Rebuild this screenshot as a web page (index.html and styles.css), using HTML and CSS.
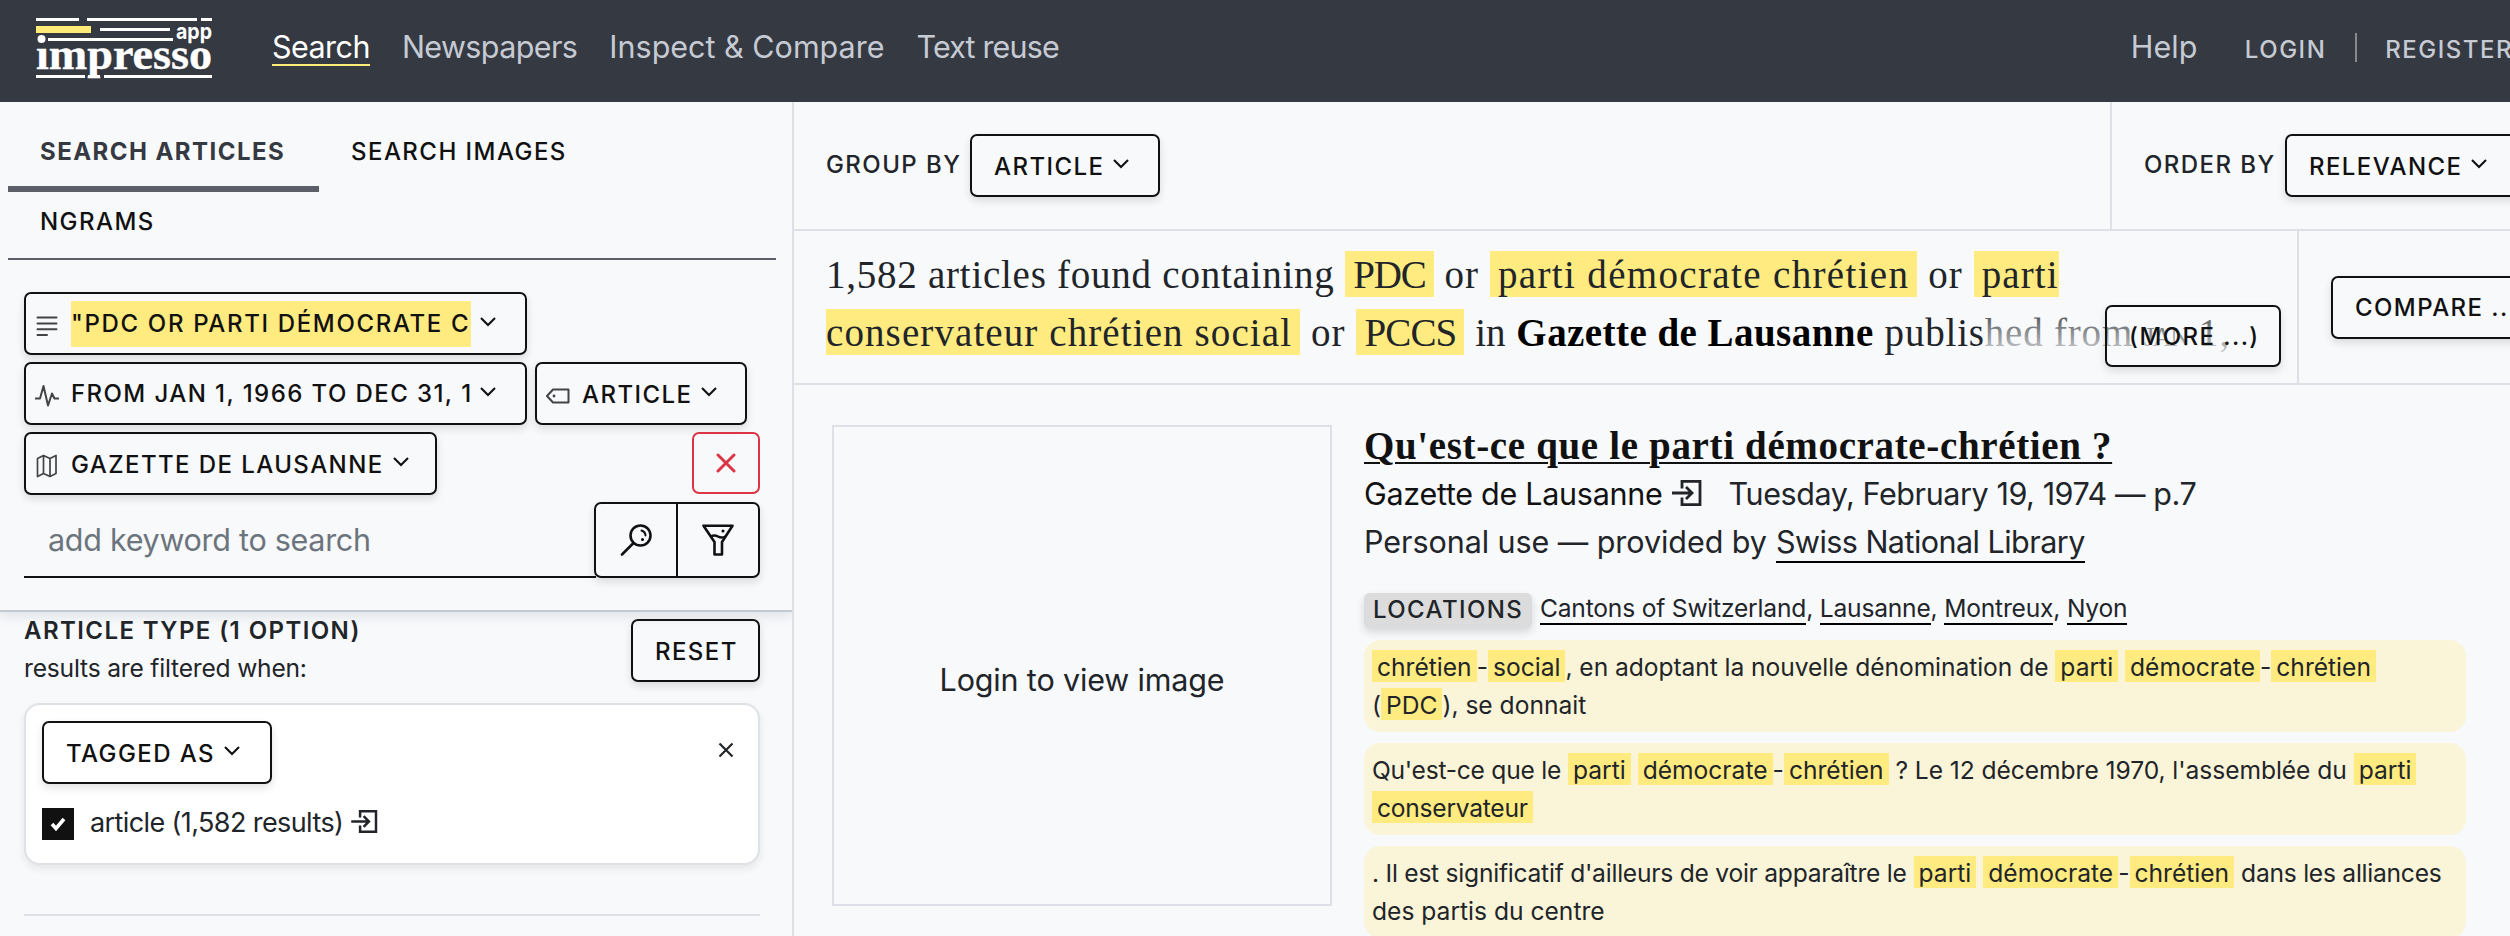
FILE: index.html
```html
<!DOCTYPE html>
<html lang="en">
<head>
<meta charset="utf-8">
<title>impresso app</title>
<link rel="stylesheet" href="styles.css">
</head>
<body>
<svg class="defs" width="0" height="0">
  <symbol id="caret" viewBox="0 0 16 10"><path d="M1 1l7 7 7-7" fill="none" stroke="currentColor" stroke-width="2.1"/></symbol>
  <symbol id="enter" viewBox="0 0 30 26"><g fill="none" stroke="currentColor" stroke-width="2.8"><path d="M10 8.500V1.400h18v23.200H10V17.500"/><path d="M0 13h19M14 7l6 6-6 6"/></g></symbol>
</svg>

<header class="topbar">
  <svg class="logo" width="178" height="62" viewBox="0 0 178 62">
    <g fill="#fff">
      <rect x="0" y="1" width="43" height="3"/><rect x="51" y="1" width="110" height="3"/><rect x="165" y="1" width="11" height="3"/>
      <rect x="64" y="11" width="70" height="3"/><rect x="12" y="21" width="125" height="3"/>
      <rect x="0" y="58" width="49" height="3"/><rect x="52" y="58" width="12" height="3"/><rect x="68" y="58" width="108" height="3"/>
      <circle cx="5.500" cy="22" r="4"/>
      <text class="logo-app" x="140" y="21.500" textLength="36" lengthAdjust="spacingAndGlyphs">app</text>
      <text class="logo-name" x="0" y="51.500" textLength="176" lengthAdjust="spacingAndGlyphs">ımpresso</text>
    </g>
    <rect x="0" y="9" width="55" height="7" fill="#ffeb78"/>
  </svg>
  <nav class="nav">
    <a class="active">Search</a><a class="nav-news">Newspapers</a><a>Inspect &amp; Compare</a><a class="nav-text">Text reuse</a>
  </nav>
  <div class="account"><a class="help">Help</a><a class="login">Login</a><i class="bar"></i><a class="register">Register</a></div>
</header>

<div class="columns">
  <aside class="sidebar">
    <div class="search-panel">
      <div class="tabs"><a class="tab current">Search articles</a><a class="tab">Search images</a><a class="tab">ngrams</a></div>
      <div class="filters">
        <div class="row">
          <button class="btn filter w503"><svg width="24" height="24" viewBox="0 0 24 24"><path d="M2.500 3.500h19M2.500 9.500h19M2.500 15.200h19M2.500 21h9.500" class="ln"/></svg><span class="clip mark">"PDC or parti démocrate chrétien</span><svg class="caret"><use href="#caret"/></svg></button>
        </div>
        <div class="row">
          <button class="btn filter w503"><svg width="24" height="24" viewBox="0 0 24 24"><path d="M.5 14.500h4.500L8.500 2l4.500 19.500L17 9.500l2.500 5H23.500" class="ln"/></svg><span class="clip date">from Jan 1, 1966 to Dec 31, 1985</span><svg class="caret"><use href="#caret"/></svg></button>
          <button class="btn filter w212"><svg width="24" height="24" viewBox="0 0 24 24"><path d="M7 5.500h15.500v13H7L1 12z" class="ln"/><circle cx="8" cy="12" r="1.400" fill="#444"/></svg><span>article</span><svg class="caret"><use href="#caret"/></svg></button>
        </div>
        <div class="row">
          <button class="btn filter w413"><svg width="24" height="24" viewBox="0 0 24 24"><path d="M2.500 4.500l6-3 6.500 3 6-3v18l-6 3-6.500-3-6 3zM8.500 1.500v18M15 4.500v18" class="ln thin"/></svg><span>Gazette de Lausanne</span><svg class="caret"><use href="#caret"/></svg></button>
          <button class="btn danger"><svg width="20" height="20" viewBox="0 0 20 20"><path d="M2 2l16 16M18 2L2 18" stroke="currentColor" stroke-width="3" stroke-linecap="round"/></svg></button>
        </div>
        <div class="searchbox">
          <div class="input">add keyword to search</div>
          <div class="tools">
            <span class="tool"><svg width="32" height="32" viewBox="0 0 32 32"><g fill="none" stroke="#111" stroke-width="2.600" stroke-linecap="round"><circle cx="20.500" cy="11.500" r="10"/><path d="M13.500 19L2 30.500"/><path d="M21.500 6.500q4 1.500 4 5" stroke-width="2"/></g><circle cx="22.500" cy="15.500" r="1.500"/></svg></span>
            <span class="tool"><svg width="32" height="32" viewBox="0 0 32 32"><path d="M1.500 1.700h29L20 18v12.500h-7.500V18z" fill="none" stroke="#111" stroke-width="2.600" stroke-linejoin="round"/><path d="M8.500 12.500q4-2 7.500 0t7.500 0" fill="none" stroke="#111" stroke-width="2.400"/><circle cx="21" cy="7" r="1.500"/></svg></span>
          </div>
        </div>
      </div>
    </div>
    <section class="facet">
      <div class="facet-head">
        <div><h3>Article type (1 option)</h3><p>results are filtered when:</p></div>
        <button class="btn reset">reset</button>
      </div>
      <div class="card">
        <div class="card-top">
          <button class="btn tagged"><span>tagged as</span><svg class="caret"><use href="#caret"/></svg></button>
          <svg class="close" width="16" height="16" viewBox="0 0 16 16"><path d="M1.500 1.500l13 13M14.500 1.500l-13 13" stroke="#212529" stroke-width="2.200"/></svg>
        </div>
        <div class="option">
          <span class="check"><svg width="16" height="14" viewBox="0 0 16 14"><path d="M2 7l4 4.500L14 2" fill="none" stroke="#fff" stroke-width="3.600"/></svg></span>
          <span class="option-label">article (1,582 results)</span>
          <svg class="enter" width="27" height="23"><use href="#enter"/></svg>
        </div>
      </div>
      <div class="rule"></div>
    </section>
  </aside>

  <main class="main">
    <div class="toolbar">
      <div class="group"><span class="label">group by</span><button class="btn w190"><span>article</span><svg class="caret"><use href="#caret"/></svg></button></div>
      <div class="order"><span class="label">order by</span><button class="btn w240"><span>relevance</span><svg class="caret"><use href="#caret"/></svg></button></div>
    </div>
    <div class="toolbar summary-row">
      <div class="summary">
        <p><span class="lead">1,582 articles found containing</span> <mark class="abbr">PDC</mark> or <mark class="wide">parti démocrate chrétien</mark> or <mark>parti<br>conservateur chrétien social</mark> or <mark class="abbr4">PCCS</mark> <span class="in">in</span> <b>Gazette de Lausanne</b> <span class="pub">published from</span> <small>JAN</small> 1,</p>
        <div class="more"><button class="btn">(more ...)</button></div>
      </div>
      <div class="compare"><button class="btn">compare ...</button></div>
    </div>
    <article class="result">
      <div class="preview">Login to view image</div>
      <div class="detail">
        <h2>Qu'est-ce que le parti démocrate-chrétien ?</h2>
        <div class="meta"><a class="paper">Gazette de Lausanne</a><svg class="enter" width="30" height="26"><use href="#enter"/></svg><span class="when">Tuesday, February 19, 1974 — p.7</span></div>
        <div class="meta"><span>Personal use — provided by</span><a class="library">Swiss National Library</a></div>
        <div class="locations"><span class="badge">locations</span><span class="places"><a>Cantons of Switzerland</a>, <a>Lausanne</a>, <a>Montreux</a>, <a>Nyon</a></span></div>
        <div class="excerpt"><mark>chrétien</mark>-<mark>social</mark><span class="t2">, en adoptant la nouvelle dénomination de</span> <mark>parti</mark> <mark>démocrate</mark>-<mark>chrétien</mark><br>(<mark>PDC</mark>), se donnait</div>
        <div class="excerpt"><span class="t1">Qu'est-ce que le</span> <mark>parti</mark> <mark>démocrate</mark>-<mark>chrétien</mark> <span class="t2">? Le 12 décembre 1970, l'assemblée du</span> <mark>parti</mark><br><mark class="t1">conservateur</mark></div>
        <div class="excerpt"><span class="t3">. Il est significatif d'ailleurs de voir apparaître le</span> <mark>parti</mark> <mark>démocrate</mark>-<mark>chrétien</mark> <span class="t1">dans les alliances</span><br>des partis du centre</div>
      </div>
    </article>
  </main>
</div>
</body>
</html>
```
FILE: styles.css
```css
* { box-sizing: border-box; margin: 0; padding: 0; }
html, body { height: 936px; overflow: hidden; }
body { background: #f8f9fb; color: #212529; font-family: Inter, sans-serif; font-size: 30.5px; white-space: nowrap; }
.defs { position: absolute; }

.topbar { display: flex; align-items: center; height: 102px; padding: 0 0 7px 36px; background: #353942; color: #c6cad3; }
.logo { margin-top: 1px; flex: none; }
.logo-app { font: 700 22px Inter, sans-serif; }
.logo-name { font: 700 44px "Liberation Serif", serif; stroke: #fff; stroke-width: .4; }
.nav { display: flex; gap: 32px; margin-left: 58px; line-height: 35px; }
.nav a { border-bottom: 2px solid transparent; }
.nav .active { color: #fff; border-color: #ffeb78; letter-spacing: -.55px; }
.nav-news { letter-spacing: -.6px; }
.nav-text { letter-spacing: -.85px; }
.account { display: flex; align-items: baseline; margin-left: 1072px; line-height: 37px; }
.help { width: 114px; }
.login, .register { font-size: 24px; font-weight: 500; letter-spacing: 1.5px; text-transform: uppercase; }
.bar { width: 2px; height: 29px; margin: 0 28px 0 29px; background: #8a8a8c; align-self: center; }

.columns { display: flex; height: 834px; }
.sidebar { width: 794px; flex: none; border-right: 2px solid #dee0e8; }
.search-panel { height: 510px; padding-top: 20px; border-bottom: 2px solid #c4cad1; box-shadow: 0 4px 12px rgba(90, 110, 125, .16); clip-path: inset(0 0 -20px 0); }
.tabs { display: flex; flex-wrap: wrap; align-content: flex-start; width: 768px; height: 138px; margin-left: 8px; border-bottom: 2px solid #5c5f68; font-size: 24px; font-weight: 500; letter-spacing: 1.45px; text-transform: uppercase; color: #111; }
.tab { height: 70px; padding: 0 32px; line-height: 60px; }
.tab:last-child { height: 66px; }
.tab.current { width: 311px; border-bottom: 6px solid #5c5f68; font-weight: 700; color: #353942; }

.btn { display: flex; align-items: center; height: 63px; padding: 1px 22px 0; border: 2px solid #111; border-radius: 7px; background: transparent; box-shadow: 0 4px 8px rgba(0, 0, 0, .12); color: #111; font: 500 24px Inter, sans-serif; letter-spacing: 1.42px; text-transform: uppercase; flex: none; white-space: nowrap; }
.caret { width: 16px; height: 10px; margin: -4px 0 0 9px; flex: none; }
.filters { display: flex; flex-direction: column; gap: 7px; padding: 32px 32px 0 24px; }
.row { display: flex; gap: 8px; }
.filter { padding: 1px 0 0 9px; }
.filter > svg:first-child { margin: 4px 12px 0 0; flex: none; }
.ln { fill: none; stroke: #444; stroke-width: 2; stroke-linecap: round; stroke-linejoin: round; }
.thin { stroke-width: 1.7; }
.w503 { width: 503px; } .w212 { width: 212px; } .w413 { width: 413px; } .w190 { width: 190px; } .w240 { width: 240px; }
.clip { width: 400px; line-height: 46px; overflow: hidden; text-align: left; }
.clip.mark { background: #ffeb7f; letter-spacing: 1.65px; }
.danger { width: 68px; height: 62px; margin-left: auto; padding: 0; justify-content: center; border-color: #dc3545; color: #dc3545; box-shadow: none; }
.searchbox { display: flex; height: 76px; }
.input { width: 572px; padding-left: 24px; border-bottom: 2px solid #111; line-height: 76px; letter-spacing: -.28px; color: #6c757d; }
.tools { display: flex; width: 166px; margin-left: -2px; border: 2px solid #111; border-radius: 7px; box-shadow: 0 4px 8px rgba(0, 0, 0, .12); }
.tool { flex: 1; display: flex; align-items: center; justify-content: center; }
.tool + .tool { border-left: 2px solid #111; }

.facet { padding: 0 32px 0 24px; }
.facet-head { display: flex; justify-content: space-between; height: 91px; }
.facet h3 { font-size: 24px; font-weight: 600; letter-spacing: 1.42px; line-height: 37px; text-transform: uppercase; }
.facet p { font-size: 24.6px; line-height: 38px; letter-spacing: -.2px; }
.reset { width: 129px; margin-top: 7px; }
.card { height: 162px; padding: 16px; border: 2px solid #dee2e6; border-radius: 16px; background: #fff; box-shadow: 0 4px 8px rgba(0, 0, 0, .08); }
.card-top { display: flex; justify-content: space-between; }
.tagged { width: 230px; }
.close { margin: 21px 8px 0 0; }
.option { display: flex; align-items: center; margin-top: 24px; font-size: 27px; line-height: 32px; letter-spacing: -.6px; }
.check { display: flex; align-items: center; justify-content: center; width: 32px; height: 32px; margin-right: 16px; background: #111; }
.option-label { margin-top: -3px; }
.option .enter { margin: -5px 0 0 8px; }
.rule { height: 2px; margin-top: 49px; background: #dee2e6; }

.main { width: 1748px; flex: none; }
.toolbar { display: flex; height: 129px; border-bottom: 2px solid #dee0e8; }
.label { font-size: 24px; font-weight: 500; letter-spacing: 1.42px; line-height: 62px; text-transform: uppercase; }
.group { display: flex; width: 1316px; padding: 32px 0 0 32px; }
.group .label { width: 144px; }
.order { display: flex; flex: 1; padding: 32px 0 0 32px; border-left: 2px solid #dee0e8; }
.order .label { width: 141px; }
.summary-row { height: 154px; }
.summary { position: relative; width: 1503px; padding: 15px 0 0 32px; font-family: "Liberation Serif", serif; font-size: 39px; line-height: 58px; letter-spacing: 1.1px; }
.summary .lead { letter-spacing: .75px; }
.summary mark { padding: 2px 8px 1px; background: #ffeb7f; color: inherit; }
.summary .abbr { letter-spacing: -1.2px; }
.summary .abbr4 { letter-spacing: -.9px; }
.summary .wide { letter-spacing: 1.35px; }
.summary .in { letter-spacing: 0; }
.summary b { color: #000; letter-spacing: .45px; }
.summary .pub { letter-spacing: .8px; }
.summary small { font-size: 27px; letter-spacing: -1.8px; }
.more { position: absolute; left: 1189px; bottom: 16px; width: 298px; height: 62px; display: flex; justify-content: flex-end; background: linear-gradient(rgba(248, 249, 251, .1), rgba(248, 249, 251, .9) 90%); }
.more .btn { width: 176px; height: 62px; }
.compare { flex: 1; display: flex; align-items: center; padding-left: 32px; border-left: 2px solid #dee0e8; }

.result { display: flex; padding: 37px 0 0 38px; }
.preview { display: flex; align-items: center; justify-content: center; width: 500px; height: 481px; margin-top: 3px; padding-top: 28px; border: 2px solid #dee0e8; letter-spacing: -.15px; }
.detail { width: 1102px; margin-left: 32px; }
h2 { font: 700 39px/48px "Liberation Serif", serif; letter-spacing: .65px; color: #111; text-decoration: underline; text-decoration-thickness: 2px; text-underline-offset: 3px; }
.meta { display: flex; line-height: 48px; }
.paper { letter-spacing: -.28px; color: #111; }
.meta .enter { margin: 10px 27px 0 9px; }
.when { letter-spacing: -.42px; }
.library { height: 45px; margin-left: 9px; border-bottom: 2px solid #000; letter-spacing: -.53px; }
.meta > span:first-child { letter-spacing: -.06px; }
.locations { display: flex; height: 35px; margin: 27px 0 12px; font-size: 24.6px; line-height: 30px; }
.badge { width: 168px; padding-left: 9px; margin-right: 8px; border-radius: 6px; background: #dcdcdc; box-shadow: 0 4px 8px rgba(0, 0, 0, .14); font-size: 24px; font-weight: 500; line-height: 33px; letter-spacing: 1.4px; text-transform: uppercase; }
.places { letter-spacing: -.2px; }
.places a { display: inline-block; border-bottom: 2px solid #000; }
.excerpt { height: 92px; padding: 8px; margin-bottom: 11px; border-radius: 16px; background: #faf4d8; font-size: 24.6px; line-height: 38px; }
.excerpt mark { padding: 2px 5px 0; background: #ffeb7f; color: inherit; }
.excerpt .t1 { letter-spacing: -.25px; }
.t2 { letter-spacing: -.06px; }
.t3 { letter-spacing: -.24px; }
```
